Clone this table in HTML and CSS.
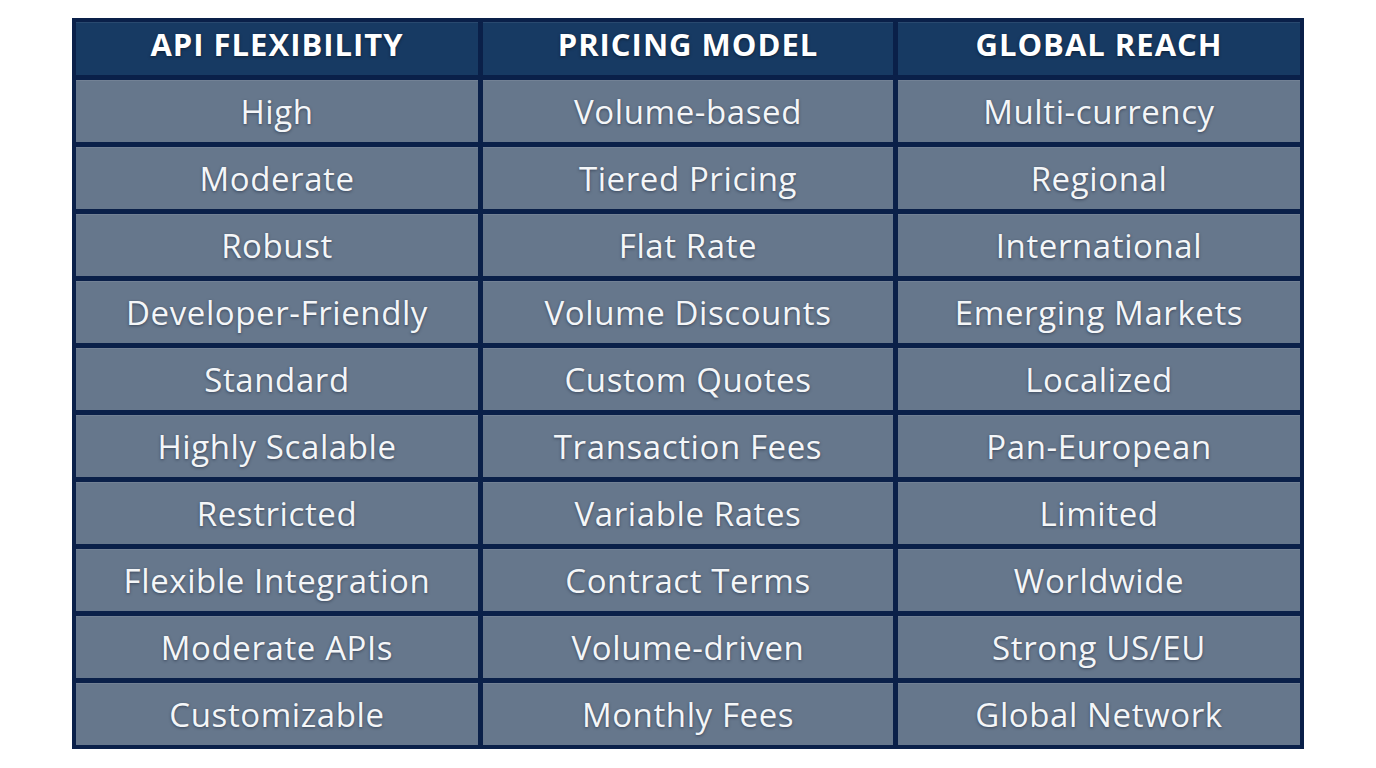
FILE: index.html
```html
<!DOCTYPE html>
<html>
<head>
<meta charset="utf-8">
<link rel="stylesheet" href="styles.css">
</head>
<body>
<div class="table">
  <div class="cell head">API FLEXIBILITY</div>
  <div class="cell head">PRICING MODEL</div>
  <div class="cell head">GLOBAL REACH</div>

  <div class="cell">High</div>
  <div class="cell">Volume-based</div>
  <div class="cell">Multi-currency</div>

  <div class="cell">Moderate</div>
  <div class="cell">Tiered Pricing</div>
  <div class="cell">Regional</div>

  <div class="cell">Robust</div>
  <div class="cell">Flat Rate</div>
  <div class="cell">International</div>

  <div class="cell">Developer-Friendly</div>
  <div class="cell">Volume Discounts</div>
  <div class="cell">Emerging Markets</div>

  <div class="cell">Standard</div>
  <div class="cell">Custom Quotes</div>
  <div class="cell">Localized</div>

  <div class="cell">Highly Scalable</div>
  <div class="cell">Transaction Fees</div>
  <div class="cell">Pan-European</div>

  <div class="cell">Restricted</div>
  <div class="cell">Variable Rates</div>
  <div class="cell">Limited</div>

  <div class="cell">Flexible Integration</div>
  <div class="cell">Contract Terms</div>
  <div class="cell">Worldwide</div>

  <div class="cell">Moderate APIs</div>
  <div class="cell">Volume-driven</div>
  <div class="cell">Strong US/EU</div>

  <div class="cell">Customizable</div>
  <div class="cell">Monthly Fees</div>
  <div class="cell">Global Network</div>
</div>
</body>
</html>
```
FILE: styles.css
```css
html, body {
  margin: 0;
  padding: 0;
  background: #ffffff;
}
body {
  padding: 18px 0 0 72px;
  font-family: "Open Sans", "Noto Sans", sans-serif;
}
.table {
  display: grid;
  grid-template-columns: 402px 410px 402px;
  grid-template-rows: 53px repeat(10, 62px);
  gap: 5px;
  padding: 4px;
  width: 1232px;
  box-sizing: border-box;
  background: #0a2049;
}
.cell {
  display: flex;
  align-items: center;
  justify-content: center;
  background: #66778c;
  color: #f4f6f8;
  font-size: 33px;
  letter-spacing: 0.6px;
  font-weight: 400;
  text-shadow: 0 1px 3px rgba(20, 30, 50, 0.55);
  box-shadow: inset 0 1px 0 rgba(255,255,255,0.08);
  white-space: nowrap;
}
.cell.head {
  background: #173a63;
  color: #ffffff;
  font-size: 31px;
  letter-spacing: 1px;
  font-weight: 700;
  text-shadow: 0 1px 3px rgba(0, 0, 0, 0.5);
  padding-bottom: 10px;
}
```
